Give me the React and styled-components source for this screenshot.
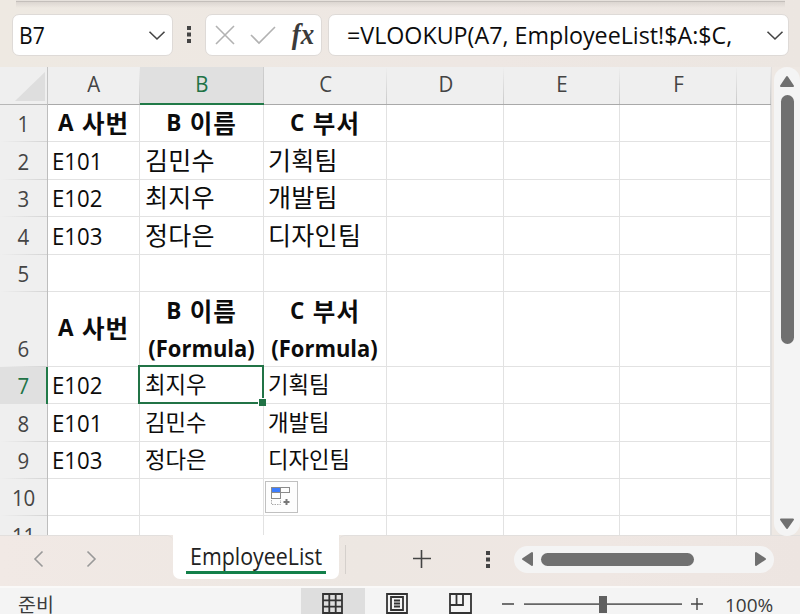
import React from 'react';
import styled, { createGlobalStyle } from 'styled-components';

const GlobalStyle = createGlobalStyle`
  * { box-sizing: border-box; }
  body { margin: 0; overflow: hidden; background: #eee8e3; }
`;

const Window = styled.div`
  width: 800px;
  height: 614px;
  display: flex;
  flex-direction: column;
  overflow: hidden;
  background: #eee8e3;
  font-family: 'Open Sans', 'Noto Sans CJK KR', sans-serif;
  color: #0c0c0c;
`;

const Text = styled.span`
  display: inline-block;
  flex: none;
  white-space: pre;
  font-size: ${(p) => p.$size || 24}px;
  font-weight: ${(p) => p.$weight || 400};
  line-height: 30px;
  height: 30px;
  letter-spacing: ${(p) => p.$gap || 0}px;
  transform-origin: ${(p) => p.$origin || 'left'} center;
  transform: scaleX(${(p) => p.$stretch || 1});
`;

const Hangul = styled(Text)`
  font-family: 'Noto Sans CJK KR', sans-serif;
`;

const Icon = styled.svg`
  display: block;
  flex: none;
  overflow: visible;
`;

/* Formula bar */
const FormulaBar = styled.header`
  flex: none;
  height: 67px;
  display: flex;
  align-items: flex-start;
  padding: 14px 10px 0 12px;
  background: linear-gradient(90deg, #eee9e2, #eee7e3 60%, #ece6e1);
`;

const RibbonShadow = styled.div`
  flex: none;
  height: 8px;
  margin: 0 15px -8px 16px;
  background: linear-gradient(#e6e1dc 0 1px, #c4bfbb 1px 2px, #dcd6d1 2px, #eee8e300);
  z-index: 1;
`;

const Field = styled.div`
  height: 42px;
  width: ${(p) => p.$width}px;
  margin-right: ${(p) => p.$after || 0}px;
  padding: 0 ${(p) => p.$right || 0}px 0 ${(p) => p.$left || 0}px;
  display: flex;
  align-items: center;
  justify-content: space-between;
  background: #fff;
  border: 1px solid #dedad7;
  border-radius: 7px;
`;

const BarDots = styled(Icon)`
  margin: 12px 14px 0 14px;
`;

const FxLabel = styled.span`
  font: italic bold 29px/30px 'Liberation Serif', serif;
  color: #3b3b3b;
  margin-top: -3px;
  transform: scaleX(0.93);
`;

/* Sheet */
const Workspace = styled.main`
  flex: none;
  height: 468px;
  display: flex;
`;

const Sheet = styled.div`
  flex: none;
  width: 772px;
  height: 468px;
  overflow: hidden;
  background: #fff;
  border-right: 1px solid #e2dfdd;
`;

const Row = styled.div`
  display: grid;
  grid-template-columns: 48px 92px 124px 123px 117px 116px 117px 34px;
  height: ${(p) => p.$height}px;
`;

const ColumnHead = styled.div`
  display: flex;
  align-items: flex-start;
  justify-content: center;
  padding-top: 2px;
  color: ${(p) => (p.$active ? '#217346' : '#444')};
  background: ${(p) =>
    p.$active
      ? 'linear-gradient(#cfcfcf, #c4c4c4) right / 1px 100% no-repeat, #e0e0e0'
      : 'linear-gradient(#efefef, #c9c9c9) right / 1px 100% no-repeat, #efefef'};
  border-bottom: ${(p) => (p.$active ? '2px solid #217a48' : '1px solid #a9a9a9')};
`;

const Corner = styled.div`
  background: #efefef;
  border-right: 1px solid #c4c4c4;
  border-bottom: 1px solid #b7b7b7;
  padding: 5px 0 0 15px;
`;

const RowHead = styled.div`
  display: flex;
  align-items: flex-end;
  justify-content: center;
  padding-bottom: 4px;
  color: ${(p) => (p.$active ? '#217346' : '#444')};
  border-right: ${(p) => (p.$active ? '2px solid #217a48' : '1px solid #bdbdbd')};
  background: ${(p) =>
    p.$active
      ? '#e0e0e0'
      : 'linear-gradient(90deg, #efefef, #d4d4d4) bottom / 100% 1px no-repeat, #efefef'};
`;

const Cell = styled.div`
  position: relative;
  z-index: ${(p) => (p.$raised ? 1 : 'auto')};
  display: flex;
  flex-direction: column;
  min-width: 0;
  border-right: 1px solid #e2e2e2;
  border-bottom: 1px solid #e2e2e2;
  justify-content: ${(p) => (p.$middle ? 'center' : 'flex-end')};
  align-items: ${(p) => (p.$center ? 'center' : 'flex-start')};
  padding: 0 0 ${(p) => p.$bottom}px ${(p) => p.$left}px;
`;

const HeadLine = styled.div`
  display: flex;
  align-items: flex-start;
  height: 30px;
  & + & { margin-top: 8px; }
`;

const Selection = styled.div`
  position: absolute;
  inset: -2px -1px -1px -2px;
  border: 2px solid #217346;
`;

const FillHandle = styled.i`
  position: absolute;
  right: -3px;
  bottom: -3px;
  width: 8px;
  height: 8px;
  background: #217346;
  border: solid #fff;
  border-width: 1px 0 0 1px;
`;

const FillOptions = styled.div`
  position: absolute;
  left: 1px;
  top: 2px;
  width: 33px;
  height: 32px;
  padding: 5px;
  background: #fdfdfd;
  border: 1px solid #c0c0c0;
  z-index: 2;
`;

/* Scroll bars */
const VScroll = styled.div`
  width: 26px;
  height: 469px;
  margin-left: 2px;
  border-radius: 13px;
  background: #f4f4f4;
  display: flex;
  flex-direction: column;
  align-items: center;
  padding: 8px 0 6px;
  position: relative;
  z-index: 1;
`;

const VThumb = styled.div`
  width: 13px;
  height: 249px;
  border-radius: 7px;
  background: #707070;
  margin: 8px 0 auto;
`;

const HScroll = styled.div`
  width: 260px;
  height: 27px;
  border-radius: 14px;
  background: #f4f4f4;
  display: flex;
  align-items: center;
  padding: 0 8px;
`;

const HThumb = styled.div`
  width: 153px;
  height: 13px;
  border-radius: 7px;
  background: #707070;
  margin: 0 auto 0 8px;
`;

/* Sheet tabs */
const TabBar = styled.nav`
  flex: none;
  height: 51px;
  display: flex;
  align-items: flex-start;
  background: linear-gradient(90deg, #f1e9e5, #ede7e2 45%, #efe7e3 75%, #ede5e1);
`;

const TabArrows = styled.div`
  width: 173px;
  height: 49px;
  padding: 0 77px 2px 34px;
  display: flex;
  align-items: center;
  justify-content: space-between;
  border-top: 1px solid #e2dfdd;
  border-top-right-radius: 6px;
`;

const Tab = styled.div`
  width: 166px;
  height: 44px;
  padding: 6px 13px 0;
  background: #fff;
  border-radius: 0 0 7px 7px;
  color: #222;
`;

const TabLabel = styled.div`
  height: 33px;
  padding-left: 4px;
  border-bottom: 3px solid #13804a;
`;

const TabTail = styled.div`
  flex: 1;
  height: 49px;
  display: flex;
  align-items: center;
  border-top: 1px solid #e2dfdd;
  border-top-left-radius: 6px;
  padding: 0 0 2px 6px;
`;

const Divider = styled.div`
  width: 1px;
  height: 29px;
  background: #d5d0cc;
  margin-right: 67px;
`;

const TabMenu = styled(Icon)`
  margin: 2px 24px 0 55px;
`;

/* Status bar */
const StatusBar = styled.footer`
  flex: none;
  height: 28px;
  display: flex;
  align-items: flex-start;
  background: #f4f4f4;
  border-top: 2px solid #faf9f8;
  color: #3b3b3b;
`;

const Status = styled.div`
  width: 301px;
  padding: 0 0 0 18px;
`;

const StatusText = styled(Hangul)`
  height: 26px;
  line-height: 32px;
`;

const ViewButton = styled.div`
  width: 64px;
  height: 26px;
  padding-top: 5px;
  display: flex;
  justify-content: center;
  background: ${(p) => (p.$active ? '#dedede' : 'none')};
`;

const Zoom = styled.div`
  display: flex;
  align-items: flex-start;
  padding-left: 9px;
`;

const ZoomSlider = styled(Icon)`
  margin-top: 3px;
`;

const Percent = styled(Text)`
  margin-left: 21px;
  height: 26px;
  line-height: 35px;
`;

const Dots = ({ as: Shape = Icon }) => (
  <Shape width="4" height="18" fill="#444">
    <rect width="4" height="4" y="0" />
    <rect width="4" height="4" y="6.5" />
    <rect width="4" height="4" y="13" />
  </Shape>
);

const Chevron = () => (
  <Icon width="16" height="9" fill="none" stroke="#444" strokeWidth="1.6">
    <path d="M.5 .7 8 8 15.5 .7" />
  </Icon>
);

const Heading = ({ letter, word }) => (
  <HeadLine>
    <Text $size={22.5} $weight={700} $gap={1.3}>{letter} </Text>
    <Hangul $size={24.5} $weight={700} $gap={1}>{word}</Hangul>
  </HeadLine>
);

const ROWS = [
  { n: 1, h: 37, head: true },
  { n: 2, h: 38, v: ['E101', '김민수', '기획팀'] },
  { n: 3, h: 37, v: ['E102', '최지우', '개발팀'] },
  { n: 4, h: 38, v: ['E103', '정다은', '디자인팀'] },
  { n: 5, h: 37 },
  { n: 6, h: 75, head: true, formula: true },
  { n: 7, h: 37, v: ['E102', '최지우', '기획팀'], small: true, selected: true },
  { n: 8, h: 38, v: ['E101', '김민수', '개발팀'], small: true },
  { n: 9, h: 37, v: ['E103', '정다은', '디자인팀'], small: true },
  { n: 10, h: 37, options: true },
  { n: 11, h: 38 },
];

const WORDS = ['사번', '이름', '부서'];

function SheetCell({ row, col }) {
  if (row.head && col < 3) {
    return (
      <Cell $center $middle={row.formula && col === 0} $bottom={row.formula ? 2 : 3} $left={0}>
        <Heading letter={'ABC'[col]} word={WORDS[col]} />
        {row.formula && col > 0 && (
          <HeadLine>
            <Text $size={22.5} $weight={700} $stretch={0.975} $origin="center">(Formula)</Text>
          </HeadLine>
        )}
      </Cell>
    );
  }
  const value = row.v && row.v[col];
  return (
    <Cell
      $raised={(row.selected && col === 1) || (row.options && col === 2)}
      $bottom={col === 0 ? 3 : 5}
      $left={col === 1 ? 5 : 4}
    >
      {value && (col === 0
        ? <Text $size={24} $stretch={0.925}>{value}</Text>
        : <Hangul $size={row.small ? 22.3 : 25} $gap={row.small ? 0 : 0.3}>{value}</Hangul>)}
      {row.selected && col === 1 && <><Selection /><FillHandle /></>}
      {row.options && col === 2 && (
        <FillOptions>
          <Icon width="21" height="21" fill="none" stroke="#8a8a8a">
            <rect x=".5" y=".5" width="9" height="5" fill="#3c7dff" />
            <rect x="9.5" y=".5" width="9" height="5" />
            <rect x=".5" y="5.5" width="9" height="6" />
            <path d="M.5 13v4.5h9V13" strokeDasharray="1.5 1" stroke="#aaa" />
            <path d="M12.5 15h6M15.5 12v6" strokeWidth="2" stroke="#777" />
          </Icon>
        </FillOptions>
      )}
    </Cell>
  );
}

export default function App() {
  return (
    <Window>
      <GlobalStyle />
      <RibbonShadow />
      <FormulaBar>
        <Field $width={161} $left={6} $right={7}>
          <Text $size={23.5} $stretch={0.9}>B7</Text>
          <Chevron />
        </Field>
        <Dots as={BarDots} />
        <Field $width={117} $left={9} $right={6} $after={6}>
          <Icon width="20" height="20" stroke="#b2b2b2" strokeWidth="1.6"><path d="M1 1 19 19M19 1 1 19" /></Icon>
          <Icon width="26" height="18" fill="none" stroke="#b2b2b2" strokeWidth="1.6"><path d="M1 9 9 17 25 1" /></Icon>
          <FxLabel>fx</FxLabel>
        </Field>
        <Field $width={461} $left={18} $right={5}>
          <Text $size={23.5} $stretch={0.989}>=VLOOKUP(A7, EmployeeList!$A:$C,</Text>
          <Chevron />
        </Field>
      </FormulaBar>
      <Workspace>
        <Sheet>
          <Row $height={38}>
            <Corner>
              <Icon width="30" height="29" fill="#dedede"><path d="M30 0V29H0Z" /></Icon>
            </Corner>
            {['A', 'B', 'C', 'D', 'E', 'F', ''].map((c) => (
              <ColumnHead key={c} $active={c === 'B'}>
                <Text $size={21.5} $stretch={0.95} $origin="center">{c}</Text>
              </ColumnHead>
            ))}
          </Row>
          {ROWS.map((row) => (
            <Row key={row.n} $height={row.h}>
              <RowHead $active={row.selected}>
                <Text $size={22} $stretch={0.93} $origin="center">{row.n}</Text>
              </RowHead>
              {[0, 1, 2, 3, 4, 5, 6].map((c) => <SheetCell key={c} row={row} col={c} />)}
            </Row>
          ))}
        </Sheet>
        <VScroll>
          <Icon width="14" height="12" fill="#707070" stroke="#707070" strokeWidth="2" strokeLinejoin="round"><path d="M7 2 13 11H1Z" /></Icon>
          <VThumb />
          <Icon width="14" height="12" fill="#707070" stroke="#707070" strokeWidth="2" strokeLinejoin="round"><path d="M7 10 13 1.5H1Z" /></Icon>
        </VScroll>
      </Workspace>
      <TabBar>
        <TabArrows>
          <Icon width="9" height="16" fill="none" stroke="#999" strokeWidth="1.6"><path d="M8.5 .5 1 8 8.5 15.5" /></Icon>
          <Icon width="9" height="16" fill="none" stroke="#999" strokeWidth="1.6"><path d="M.5 .5 8 8 .5 15.5" /></Icon>
        </TabArrows>
        <Tab><TabLabel><Text $size={23.5} $stretch={0.91}>EmployeeList</Text></TabLabel></Tab>
        <TabTail>
          <Divider />
          <Icon width="18" height="18" stroke="#444" strokeWidth="1.6"><path d="M0 8.5H18M8.5 0V18" /></Icon>
          <Dots as={TabMenu} />
          <HScroll>
            <Icon width="11" height="14" fill="#707070" stroke="#707070" strokeWidth="2" strokeLinejoin="round"><path d="M1 7 10 1V13Z" /></Icon>
            <HThumb />
            <Icon width="11" height="14" fill="#707070" stroke="#707070" strokeWidth="2" strokeLinejoin="round"><path d="M10 7 1 1V13Z" /></Icon>
          </HScroll>
        </TabTail>
      </TabBar>
      <StatusBar>
        <Status><StatusText $size={19.5}>준비</StatusText></Status>
        <ViewButton $active>
          <Icon width="23" height="21" fill="none" stroke="#333" strokeWidth="1.8"><path d="M1 1H20V20H1ZM7.3 1V20M13.7 1V20M1 7.3H20M1 13.7H20" /></Icon>
        </ViewButton>
        <ViewButton>
          <Icon width="22" height="21" fill="none" stroke="#333" strokeWidth="1.8"><path d="M1 1H21V20H1ZM5 4H17V17H5ZM8 7.5H14M8 10.5H14M8 13.5H14" /></Icon>
        </ViewButton>
        <ViewButton>
          <Icon width="24" height="21" fill="none" stroke="#333" strokeWidth="1.8"><path d="M1 1H22V20H1ZM1 12H14V1M7.5 1V12" /></Icon>
        </ViewButton>
        <Zoom>
          <ZoomSlider width="202" height="23" stroke="#444" strokeWidth="1.4">
            <path d="M0 13H12M189 13H201M195 7V19" />
            <path d="M22 13.2H180" stroke="#666" strokeWidth="1.8" />
            <rect x="97" y="5" width="8" height="17" fill="#606060" stroke="none" />
          </ZoomSlider>
          <Percent $size={19}>100%</Percent>
        </Zoom>
      </StatusBar>
    </Window>
  );
}
